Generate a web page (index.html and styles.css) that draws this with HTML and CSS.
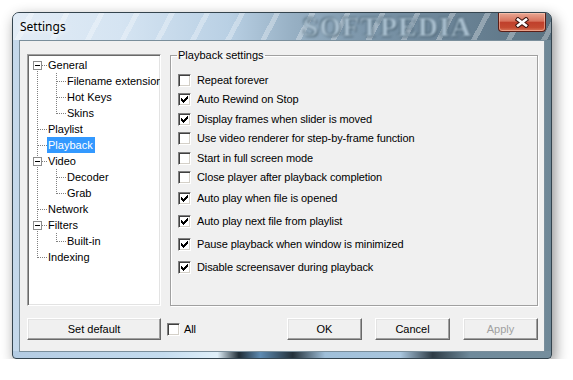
FILE: index.html
```html
<!DOCTYPE html>
<html lang="en">
<head>
  <meta charset="UTF-8">
  <title>Settings</title>
  <link rel="stylesheet" href="styles.css">
</head>
<body>

  <div class="window">
    <div class="titlebar">
      <span class="title">Settings</span>
      <span class="watermark">SOFTPEDIA</span>
      <button class="close" title="Close">
        <svg width="14" height="11" viewBox="-7 -5.5 14 11">
          <path d="M-4 -3 L4 3 M4 -3 L-4 3" stroke="#3c1510" stroke-width="4.6" stroke-linecap="square"/>
          <path d="M-4 -3 L4 3 M4 -3 L-4 3" stroke="#fff" stroke-width="2.6" stroke-linecap="square"/>
        </svg>
      </button>
    </div>

    <div class="client">
      <div class="main">
        <!-- Category tree -->
        <div class="tree">
          <div class="row"><span class="g g-start"><i class="box"></i></span><span class="label">General</span></div>
          <div class="row"><span class="g g-line"></span><span class="g g-tee"></span><span class="label">Filename extension</span></div>
          <div class="row"><span class="g g-line"></span><span class="g g-tee"></span><span class="label">Hot Keys</span></div>
          <div class="row"><span class="g g-line"></span><span class="g g-end"></span><span class="label">Skins</span></div>
          <div class="row"><span class="g g-tee"></span><span class="label">Playlist</span></div>
          <div class="row"><span class="g g-tee"></span><span class="label selected">Playback</span></div>
          <div class="row"><span class="g g-tee"><i class="box"></i></span><span class="label">Video</span></div>
          <div class="row"><span class="g g-line"></span><span class="g g-tee"></span><span class="label">Decoder</span></div>
          <div class="row"><span class="g g-line"></span><span class="g g-end"></span><span class="label">Grab</span></div>
          <div class="row"><span class="g g-tee"></span><span class="label">Network</span></div>
          <div class="row"><span class="g g-tee"><i class="box"></i></span><span class="label">Filters</span></div>
          <div class="row"><span class="g g-line"></span><span class="g g-end"></span><span class="label">Built-in</span></div>
          <div class="row"><span class="g g-end"></span><span class="label">Indexing</span></div>
        </div>

        <!-- Playback page -->
        <fieldset class="group">
          <legend>Playback settings</legend>
          <div class="opts">
            <label class="check"><span class="cb"></span>Repeat forever</label>
            <label class="check"><span class="cb"><svg width="11" height="11" viewBox="1 1 11 11"><path d="M3 5v3h1v1h1v1h1v-1h1v-1h1v-1h1v-1h1v-3h-1v1h-1v1h-1v1h-1v1h-1v-1h-1v-1h-1z"/></svg></span>Auto Rewind on Stop</label>
            <label class="check"><span class="cb"><svg width="11" height="11" viewBox="1 1 11 11"><path d="M3 5v3h1v1h1v1h1v-1h1v-1h1v-1h1v-1h1v-3h-1v1h-1v1h-1v1h-1v1h-1v-1h-1v-1h-1z"/></svg></span>Display frames when slider is moved</label>
            <label class="check"><span class="cb"></span>Use video renderer for step-by-frame function</label>
            <label class="check"><span class="cb"></span>Start in full screen mode</label>
            <label class="check"><span class="cb"></span>Close player after playback completion</label>
          </div>
          <div class="opts opts-loose">
            <label class="check"><span class="cb"><svg width="11" height="11" viewBox="1 1 11 11"><path d="M3 5v3h1v1h1v1h1v-1h1v-1h1v-1h1v-1h1v-3h-1v1h-1v1h-1v1h-1v1h-1v-1h-1v-1h-1z"/></svg></span>Auto play when file is opened</label>
            <label class="check"><span class="cb"><svg width="11" height="11" viewBox="1 1 11 11"><path d="M3 5v3h1v1h1v1h1v-1h1v-1h1v-1h1v-1h1v-3h-1v1h-1v1h-1v1h-1v1h-1v-1h-1v-1h-1z"/></svg></span>Auto play next file from playlist</label>
            <label class="check"><span class="cb"><svg width="11" height="11" viewBox="1 1 11 11"><path d="M3 5v3h1v1h1v1h1v-1h1v-1h1v-1h1v-1h1v-3h-1v1h-1v1h-1v1h-1v1h-1v-1h-1v-1h-1z"/></svg></span>Pause playback when window is minimized</label>
            <label class="check"><span class="cb"><svg width="11" height="11" viewBox="1 1 11 11"><path d="M3 5v3h1v1h1v1h1v-1h1v-1h1v-1h1v-1h1v-3h-1v1h-1v1h-1v1h-1v1h-1v-1h-1v-1h-1z"/></svg></span>Disable screensaver during playback</label>
          </div>
        </fieldset>
      </div>

      <div class="footer">
        <button class="btn btn-wide">Set default</button>
        <label class="check check-all"><span class="cb"></span>All</label>
        <div class="actions">
          <button class="btn">OK</button>
          <button class="btn">Cancel</button>
          <button class="btn" disabled>Apply</button>
        </div>
      </div>
    </div>
  </div>

</body>
</html>
```

FILE: styles.css
```css
/* Page */
body {
  margin: 0;
  padding: 12px 0 0 12px;
  background: #fff;
  font-family: "Liberation Sans", Arial, sans-serif;
  font-size: 11px;
  color: #000;
}

/* Aero window frame */
.window {
  width: 540px;
  height: 347px;
  box-sizing: border-box;
  border: 1px solid #34444e;
  border-radius: 7px 7px 4px 4px;
  background:
    linear-gradient(90deg, #b3cbe2 0%, #c4dcef 28%, #e0f0fa 38%, #1f2c35 42%, #5e8bb2 46%, #24313a 52%, #9fbfd9 58%, #a9c6de 72%, #2e3c46 78%, #6f8a9b 85%, #758e9d 100%) left bottom / 100% 7px no-repeat,
    linear-gradient(90deg, #c4d8ea 0%, #b6cde2 30%, #9fb8cb 55%, #89a2b3 75%, #6e8796 100%);
  box-shadow: 3px 5px 14px rgba(0, 0, 0, 0.45);
  display: flex;
  flex-direction: column;
  overflow: hidden;
}

.titlebar {
  height: 27px;
  flex: none;
  display: flex;
  align-items: center;
  background:
    repeating-linear-gradient(118deg, rgba(255, 255, 255, 0) 0 14px, rgba(255, 255, 255, 0.3) 14px 19px, rgba(255, 255, 255, 0) 19px 31px),
    linear-gradient(90deg, #e2ecf6 0%, #d5e4f2 20%, #b9d0e4 40%, #97b0c4 52%, #7d97ab 65%, #6a8396 82%, #5b7281 100%);
}

.title {
  padding-left: 7px;
  font-family: "Noto Sans", "Open Sans", sans-serif;
  font-size: 12px;
  color: #000;
  text-shadow: 0 0 6px #fff, 0 0 10px #fff;
}

.watermark {
  flex: none;
  margin-left: auto;
  margin-right: 26px;
  font-family: "Liberation Serif", serif;
  font-weight: bold;
  font-size: 28px;
  line-height: 27px;
  letter-spacing: 1px;
  white-space: nowrap;
  color: #a9bfcf;
  text-shadow: 1px 1px 1px #3e5564, -1px -1px 1px #4d6676;
  filter: blur(0.8px);
}

.close {
  flex: none;
  align-self: flex-start;
  width: 48px;
  height: 19px;
  margin-right: 5px;
  padding: 0;
  border: 1px solid #5a1e17;
  border-top: none;
  border-radius: 0 0 4px 4px;
  background: linear-gradient(#e8a794 0%, #d8735d 45%, #c0402c 52%, #c44a31 80%, #d9775a 100%);
  box-shadow: inset 0 0 0 1px rgba(255, 210, 190, 0.5);
  display: flex;
  align-items: center;
  justify-content: center;
}

/* Client area */
.client {
  flex: 1;
  margin: 0 6px 6px;
  border: 1px solid #7a8e9b;
  background: #f0f0f0;
  padding: 7px 6px 11px 7px;
  display: flex;
  flex-direction: column;
}

.main {
  height: 258px;
  display: flex;
}

/* Tree view */
.tree {
  width: 134px;
  margin-top: 6px;
  box-sizing: border-box;
  border: 1px solid;
  border-color: #a0a0a0 #fff #fff #a0a0a0;
  box-shadow: inset 1px 1px #696969, inset -1px -1px #e3e3e3;
  background: #fff;
  padding-top: 2px;
  overflow: hidden;
}

.row {
  display: flex;
  height: 16px;
}

.g {
  width: 19px;
  height: 16px;
  flex: none;
  box-sizing: border-box;
  padding: 4px 0 0 5px;
  background-repeat: no-repeat;
}

.g-line {
  background-image: repeating-linear-gradient(to bottom, #808080 0 1px, transparent 1px 2px);
  background-size: 1px 16px;
  background-position: 9px 0;
}

.g-tee,
.g-end,
.g-start {
  background-image:
    repeating-linear-gradient(to bottom, #808080 0 1px, transparent 1px 2px),
    repeating-linear-gradient(to right, #808080 0 1px, transparent 1px 2px);
  background-size: 1px 16px, 9px 1px;
  background-position: 9px 0, 10px 8px;
}

.g-end {
  background-size: 1px 9px, 9px 1px;
}

.g-start {
  background-size: 1px 8px, 9px 1px;
  background-position: 9px 8px, 10px 8px;
}

.box {
  display: block;
  width: 9px;
  height: 9px;
  box-sizing: border-box;
  border: 1px solid #8c8c8c;
  background: linear-gradient(#000, #000) center / 5px 1px no-repeat, #fff;
}

.label {
  padding: 0 2px 0 1px;
  line-height: 16px;
  white-space: nowrap;
}

.label.selected {
  background: #3399ff;
  color: #fff;
}

/* Group box */
.group {
  flex: 1;
  min-width: 0;
  margin: 0 0 0 9px;
  padding: 12px 6px 0 7px;
  border: 1px solid #a0a0a0;
  box-shadow: inset 1px 1px #fff, 1px 1px #fff;
}

.group legend {
  padding: 0 1px;
  margin-left: -1px;
  line-height: 14px;
}

.opts {
  display: flex;
  flex-direction: column;
  gap: 6.4px;
}

.opts-loose {
  margin-top: 8px;
  gap: 10px;
}

.check {
  display: flex;
  align-items: center;
  gap: 6px;
  height: 13px;
  line-height: 13px;
  white-space: nowrap;
  letter-spacing: -0.1px;
}

.cb {
  width: 13px;
  height: 13px;
  flex: none;
  box-sizing: border-box;
  border: 1px solid;
  border-color: #808080 #fff #fff #808080;
  box-shadow: inset 1px 1px #404040, inset -1px -1px #d4d0c8;
  background: #fff;
}

.cb svg {
  display: block;
  shape-rendering: crispEdges;
}

/* Bottom buttons */
.footer {
  margin-top: 12px;
  display: flex;
  align-items: center;
}

.btn {
  width: 75px;
  height: 22px;
  padding: 0;
  font-family: inherit;
  font-size: 11px;
  color: #000;
  background: #f0f0f0;
  border: 1px solid;
  border-color: #fff #696969 #696969 #fff;
  box-shadow: inset -1px -1px #a0a0a0, inset 1px 1px #e3e3e3;
}

.btn:disabled {
  color: #a0a0a0;
}

.btn-wide {
  width: 134px;
}

.check-all {
  margin-left: 6px;
  gap: 4px;
}

.actions {
  margin-left: auto;
  display: flex;
  gap: 13px;
}
```
